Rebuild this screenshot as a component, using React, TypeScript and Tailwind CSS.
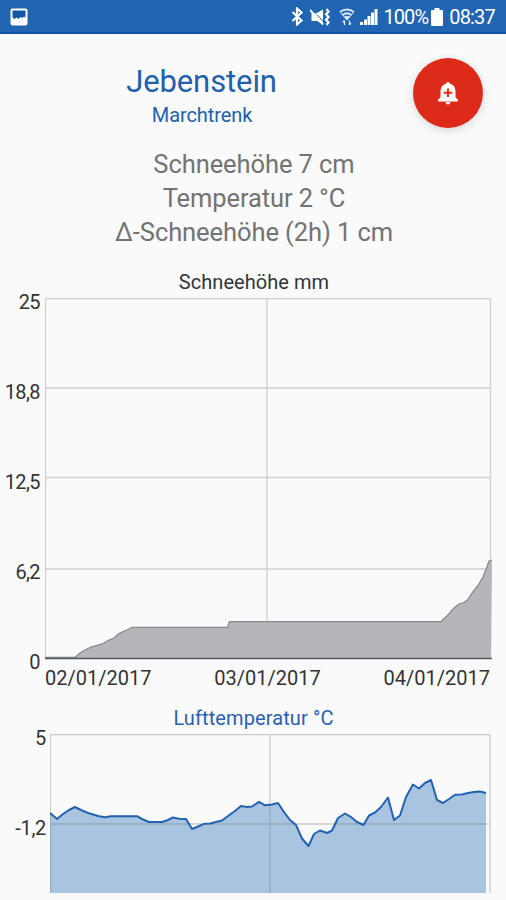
import React from "react";

const snowLabels = ["25", "18,8", "12,5", "6,2", "0"];
const tempLabels = ["5", "-1,2"];
const dates = ["02/01/2017", "03/01/2017", "04/01/2017"];

const snowLine =
  "0,359.5 30,359.5 35,355 41,351.5 46,349 53,347 58,345.5 63,342.5 69,340 74,335.5 79,333 83,331.5 87,329.3 182.5,329.3 184.5,323.6 396,323.6 402,318 409,310 414,306 419,304.5 423,301.5 427,295 433,287.5 438,279 442,269 444,263 447,262";

const tempLine =
  "0,79 7,85 13,80 19,76 25,73 31,76 38,79 49,82.3 55,83.2 61,82.2 87,82.2 93,85.5 99,88 112,88 118,86 123,83.5 129,84.8 136,85 142,95 148,92.5 154,89.8 160,89.5 166,88 172,86.5 178,82 185,77 191,72 197,73 202,72.5 209,67.8 215,71.3 222,70.5 228,69 234,78 240,86 246,91 252,104.5 258.5,112 264,100 270,96.5 277,99 282,96.5 288,84 295,79.5 301,83 307,88 313.5,91 319,81.5 325,78.5 331,73 338,63.5 344,86 350,81.5 356,63 363,50.5 369,54.5 375,49 381,46 387,66 393,69 399,65 405,60.8 412,60.5 418,59 424,58 430,57.5 436,59";

const StatusBar = () => (
  <div className="flex h-[34px] items-center border-b-2 border-[#0c55a5] bg-[#2164b2] pt-[1px] text-white">
    {/* screenshot notification */}
    <svg width="18" height="18" viewBox="0 0 18 18" className="ml-[10px]">
      <rect x=".5" y=".5" width="17" height="17" rx="2" fill="white" />
      <path d="M2.500 2.500h13v7l-1.500-1-1.500 1.500-2-1-2 2-2-1.500-2 1.500-2-1.500z" fill="#1455a4" />
    </svg>
    <div className="ml-auto flex items-center pr-[11px]">
      <svg width="13" height="19" viewBox="0 0 13 19" fill="none">
        <path d="M1.500 5l9 8.500-4.500 4V1.500l4.500 4L1.500 14" stroke="white" strokeWidth="2.200" />
      </svg>
      {/* muted + vibration */}
      <svg width="20" height="18" viewBox="0 0 20 18" className="ml-[6px]" fill="none">
        <path d="M1.500 5.500h4.500L13 1.500v15L7 13H1.500z" fill="white" />
        <path d="M7 6.500l7 8" stroke="#2164b2" strokeWidth="1" />
        <path d="M0 2l13 14.500" stroke="white" strokeWidth="2" />
        <path d="M16.500 1l2 2.700-2.500 2.600 2.500 2.700-2.500 2.700 2.500 2.600-2 2.700" stroke="white" strokeWidth="2.200" />
      </svg>
      {/* wifi with traffic arrows */}
      <svg width="16" height="18" viewBox="0 0 16 18" className="ml-[9px]" fill="none" stroke="#dbe8f6">
        <path d="M1 4q7-5 14 0M3.500 7q4.500-3.500 9 0" strokeWidth="1.900" />
        <path d="M1.500 4.500L8 12l6.500-7.500" strokeWidth="1" />
        <path d="M5.500 9Q8 7.500 10.500 9L8 11.500z" fill="#dbe8f6" />
        <path d="M5.500 17v-4.500M4 14.500l1.500-2M10.500 12.500V17M10.500 17l1.500-2" strokeWidth="1.300" />
      </svg>
      <svg width="18" height="18" viewBox="0 0 18 18" className="ml-[5px]" fill="white">
        <path d="M0 14h3v3H0zM4 11.500h3v5.500H4zM7.500 8h3v9h-3zM11 4.500h3V17h-3zM14.500 1h3v16h-3z" />
      </svg>
      <span className="ml-[5px] text-[20px] leading-none tracking-[-0.9px]">100%</span>
      <svg width="12" height="18" viewBox="0 0 12 18" className="ml-[3px]" fill="white">
        <path d="M3.500 0h5v2H11q1 0 1 1v14q0 1-1 1H1q-1 0-1-1V3q0-1 1-1h2.500z" />
      </svg>
      <span className="ml-[6px] text-[20px] leading-none tracking-[-0.8px]">08:37</span>
    </div>
  </div>
);

const Header = () => (
  <div className="flex h-[113px] justify-between pr-[23px]">
    <div className="w-[403px] pt-[30px] text-center text-[#2160ab]">
      <h1 className="text-[31px] leading-[36px] tracking-[-0.1px]">Jebenstein</h1>
      <h2 className="mt-[3px] pl-[1px] text-[20px] leading-[24px] tracking-[-0.1px]">Marchtrenk</h2>
    </div>
    <button className="mt-[24px] flex size-[70px] shrink-0 items-center justify-center rounded-full bg-[#de2a18] text-white shadow-[0_2px_8px_rgba(0,0,0,0.15)]">
      <svg width="20" height="24" viewBox="0 0 20 24">
        <path
          d="M10 1q1.500 0 2 1.500Q17.500 4.500 17.500 10v6l2.500 3v1.500H0V19l2.500-3v-6q0-5.500 5.500-7.500Q8.500 1 10 1zM7.500 21h5q-.5 2.500-2.500 2.500T7.500 21z"
          fill="currentColor"
        />
        <path d="M10 7.500v8.500M5.700 11.700h8.600" stroke="#de2a18" strokeWidth="1.900" />
      </svg>
    </button>
  </div>
);

const SnowChart = () => (
  <section className="mt-[21px]">
    <h3 className="pl-[2px] text-center text-[20px] leading-[24px] tracking-[0.05px] text-[#33343c]">
      Schneehöhe mm
    </h3>
    <div className="flex h-[372px]">
      <div className="mt-[-4px] w-[40px] shrink-0 text-right text-[20px] tracking-[-0.6px] text-[#333]">
        {snowLabels.map((label) => (
          <div key={label} className="h-[90px] leading-[24px]">
            {label}
          </div>
        ))}
      </div>
      <svg className="mt-[4px] ml-[5px] shrink-0" width="450" height="364" fill="none">
        <path
          d="M0 .5H446M0 90H446M0 179.500H446M0 271H446M.5 0V360M222 0V360M445.500 0V360"
          stroke="#d0d0d0"
          strokeWidth="1.300"
        />
        <polygon points={`${snowLine} 446,360 0,360`} fill="#b4b6ba" />
        <polyline points={snowLine} stroke="#85898d" strokeWidth="1.300" />
        <path d="M0 360.500H447" stroke="#55575b" strokeWidth="1.600" />
      </svg>
    </div>
    <div className="flex justify-between pr-[16px] pl-[45px] text-[20px] leading-[24px] text-[#333]">
      {dates.map((date) => (
        <span key={date}>{date}</span>
      ))}
    </div>
  </section>
);

const TemperatureChart = () => (
  <section className="mt-[16px]">
    <h3 className="pl-[1px] text-center text-[20px] leading-[24px] tracking-[0.1px] text-[#2b60ae]">
      Lufttemperatur °C
    </h3>
    <div className="flex h-[170px]">
      <div className="mt-[-4px] w-[46px] shrink-0 text-right text-[20px] tracking-[-0.3px] text-[#333]">
        {tempLabels.map((label) => (
          <div key={label} className="h-[90px] leading-[24px]">
            {label}
          </div>
        ))}
      </div>
      <svg className="mt-[4px] ml-[4px] shrink-0" width="442" height="159" fill="none">
        <polygon points={`${tempLine} 436,159 0,159`} fill="#a9c4e1" />
        <path
          d="M0 .5H440.500M.5 0V159M220 0V159M440 0V159M0 90H440"
          stroke="#777"
          strokeOpacity="0.350"
          strokeWidth="1.300"
        />
        <polyline points={tempLine} stroke="#2363ae" strokeWidth="2" strokeLinejoin="round" />
      </svg>
    </div>
  </section>
);

const App: React.FC = () => {
  return (
    <div className="h-[900px] w-[506px] overflow-hidden bg-[#fafafa] font-['Roboto',sans-serif]">
      <StatusBar />
      <Header />
      <div className="pl-[2px] text-center text-[25.5px] leading-[34px] tracking-[-0.08px] text-[#737373]">
        <p>Schneehöhe 7 cm</p>
        <p>Temperatur 2 °C</p>
        <p>Δ-Schneehöhe (2h) 1 cm</p>
      </div>
      <SnowChart />
      <TemperatureChart />
    </div>
  );
};

export default App;
